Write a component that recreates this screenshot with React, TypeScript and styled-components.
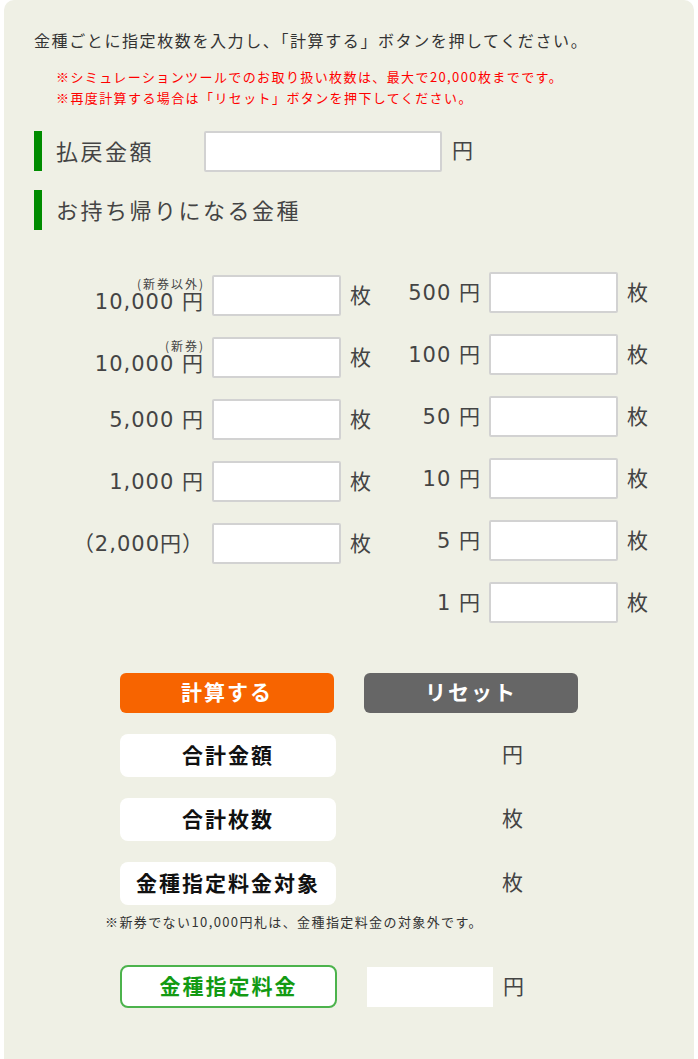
import React from "react";
import styled, { createGlobalStyle } from "styled-components";

const GlobalStyle = createGlobalStyle`
  html, body { margin: 0; padding: 0; background: #ffffff; }
  body {
    font-family: "Noto Sans CJK JP", "Noto Sans", sans-serif;
    color: #333333;
  }
`;

const Panel = styled.div`
  box-sizing: border-box;
  width: 690px;
  min-height: 1059px;
  margin-left: 4px;
  background: #eff0e5;
  border-radius: 10px 10px 0 0;
  padding: 28px 30px 40px;
`;

const Intro = styled.p`
  margin: 0;
  font-size: 16px;
  line-height: 24px;
  letter-spacing: 1.6px;
  color: #333;
`;

const Notes = styled.div`
  margin-top: 14px;
  padding-left: 22px;
  font-size: 13px;
  line-height: 21px;
  letter-spacing: 1.4px;
  color: #ff0000;
`;

const Heading = styled.div<{ $mt: number }>`
  display: flex;
  align-items: center;
  height: 40px;
  margin-top: ${(p) => p.$mt}px;
`;

const HeadingBar = styled.span`
  width: 8px;
  align-self: stretch;
  background: #008c00;
`;

const HeadingText = styled.span<{ $w?: number }>`
  margin-left: 14px;
  ${(p) => (p.$w ? `width: ${p.$w}px;` : "")}
  font-size: 22px;
  letter-spacing: 2.5px;
  color: #444;
  padding-bottom: 3px;
`;

const TextInput = styled.input<{ $w: number }>`
  box-sizing: border-box;
  width: ${(p) => p.$w}px;
  height: 41px;
  margin: 0;
  border: 2px solid #d2d2d2;
  border-radius: 2px;
  background: #ffffff;
  outline: none;
`;

const Unit = styled.span<{ $ml?: number }>`
  margin-left: ${(p) => p.$ml ?? 10}px;
  padding-bottom: 4px;
  font-family: "Noto Sans CJK JP", sans-serif;
  font-size: 21px;
  line-height: 24px;
  color: #444;
`;

const DenomGrid = styled.div`
  display: flex;
  align-items: flex-start;
  margin-top: 42px;
`;

const DenomColumn = styled.div<{ $mt: number }>`
  display: flex;
  flex-direction: column;
  gap: 21px;
  margin-top: ${(p) => p.$mt}px;
`;

const DenomRow = styled.div`
  display: flex;
  align-items: center;
  height: 41px;
`;

const DenomLabel = styled.div<{ $w: number }>`
  width: ${(p) => p.$w}px;
  margin-right: 9px;
  display: flex;
  flex-direction: column;
  align-items: flex-end;
`;

const DenomSub = styled.span`
  font-size: 12px;
  line-height: 13px;
  letter-spacing: 2px;
  margin-right: -2px;
  color: #444;
`;

const DenomMain = styled.span`
  font-family: "DejaVu Sans", "Noto Sans CJK JP", sans-serif;
  font-size: 21px;
  line-height: 24px;
  letter-spacing: 1px;
  margin-right: -1px;
  color: #444;
  white-space: nowrap;
`;

const Actions = styled.div`
  display: flex;
  gap: 30px;
  margin-top: 50px;
  padding-left: 86px;
`;

const ActionButton = styled.button<{ $bg: string }>`
  width: 214px;
  height: 40px;
  border: none;
  border-radius: 6px;
  background: ${(p) => p.$bg};
  color: #ffffff;
  font-family: "Noto Sans CJK JP", sans-serif;
  font-size: 21px;
  line-height: 24px;
  font-weight: 700;
  letter-spacing: 2px;
  padding: 0 0 4px;
  cursor: pointer;
`;

const SummaryRow = styled.div`
  display: flex;
  align-items: center;
  margin-top: 21px;
  padding-left: 86px;
`;

const SummaryLabel = styled.div`
  box-sizing: border-box;
  width: 216px;
  height: 43px;
  padding-bottom: 4px;
  display: flex;
  align-items: center;
  justify-content: center;
  background: #ffffff;
  border-radius: 8px;
  font-size: 21px;
  line-height: 24px;
  font-weight: 700;
  letter-spacing: 2px;
  color: #111;
`;

const SummaryValue = styled.span`
  width: 187px;
  padding-bottom: 6px;
  text-align: right;
  font-size: 21px;
  line-height: 24px;
  color: #444;
`;

const FootNote = styled.p`
  margin: 8px 0 0 71px;
  font-size: 13px;
  line-height: 18px;
  letter-spacing: 1.4px;
  color: #333;
`;

const FeeRow = styled.div`
  display: flex;
  align-items: center;
  margin-top: 34px;
  padding-left: 86px;
`;

const FeeLabel = styled.div`
  box-sizing: border-box;
  width: 217px;
  height: 43px;
  padding-bottom: 4px;
  display: flex;
  align-items: center;
  justify-content: center;
  background: #ffffff;
  border: 2px solid #4cb34c;
  border-radius: 8px;
  font-size: 21px;
  line-height: 24px;
  font-weight: 700;
  letter-spacing: 2px;
  color: #139a13;
`;

const FeeValue = styled.div`
  width: 126px;
  height: 40px;
  margin-left: 30px;
  background: #ffffff;
`;

type Denom = { main: string; sub?: string };

const left: Denom[] = [
  { main: "10,000 円", sub: "(新券以外)" },
  { main: "10,000 円", sub: "(新券)" },
  { main: "5,000 円" },
  { main: "1,000 円" },
  { main: "（2,000円）" },
];

const right: Denom[] = [
  { main: "500 円" },
  { main: "100 円" },
  { main: "50 円" },
  { main: "10 円" },
  { main: "5 円" },
  { main: "1 円" },
];

function DenomList({ items, labelW, mt }: { items: Denom[]; labelW: number; mt: number }) {
  return (
    <DenomColumn $mt={mt}>
      {items.map((d, i) => (
        <DenomRow key={i}>
          <DenomLabel $w={labelW}>
            {d.sub && <DenomSub>{d.sub}</DenomSub>}
            <DenomMain>{d.main}</DenomMain>
          </DenomLabel>
          <TextInput $w={129} type="text" />
          <Unit $ml={9}>枚</Unit>
        </DenomRow>
      ))}
    </DenomColumn>
  );
}

export default function App() {
  return (
    <>
      <GlobalStyle />
      <Panel>
        <Intro>金種ごとに指定枚数を入力し、「計算する」ボタンを押してください。</Intro>
        <Notes>
          <div>※シミュレーションツールでのお取り扱い枚数は、最大で20,000枚までです。</div>
          <div>※再度計算する場合は「リセット」ボタンを押下してください。</div>
        </Notes>
        <Heading $mt={23}>
          <HeadingBar />
          <HeadingText $w={148}>払戻金額</HeadingText>
          <TextInput $w={238} type="text" />
          <Unit>円</Unit>
        </Heading>
        <Heading $mt={19}>
          <HeadingBar />
          <HeadingText>お持ち帰りになる金種</HeadingText>
        </Heading>
        <DenomGrid>
          <DenomList items={left} labelW={169} mt={3} />
          <DenomList items={right} labelW={109} mt={0} />
        </DenomGrid>
        <Actions>
          <ActionButton $bg="#f76400">計算する</ActionButton>
          <ActionButton $bg="#666666">リセット</ActionButton>
        </Actions>
        <SummaryRow>
          <SummaryLabel>合計金額</SummaryLabel>
          <SummaryValue>円</SummaryValue>
        </SummaryRow>
        <SummaryRow>
          <SummaryLabel>合計枚数</SummaryLabel>
          <SummaryValue>枚</SummaryValue>
        </SummaryRow>
        <SummaryRow>
          <SummaryLabel>金種指定料金対象</SummaryLabel>
          <SummaryValue>枚</SummaryValue>
        </SummaryRow>
        <FootNote>※新券でない10,000円札は、金種指定料金の対象外です。</FootNote>
        <FeeRow>
          <FeeLabel>金種指定料金</FeeLabel>
          <FeeValue />
          <Unit>円</Unit>
        </FeeRow>
      </Panel>
    </>
  );
}
